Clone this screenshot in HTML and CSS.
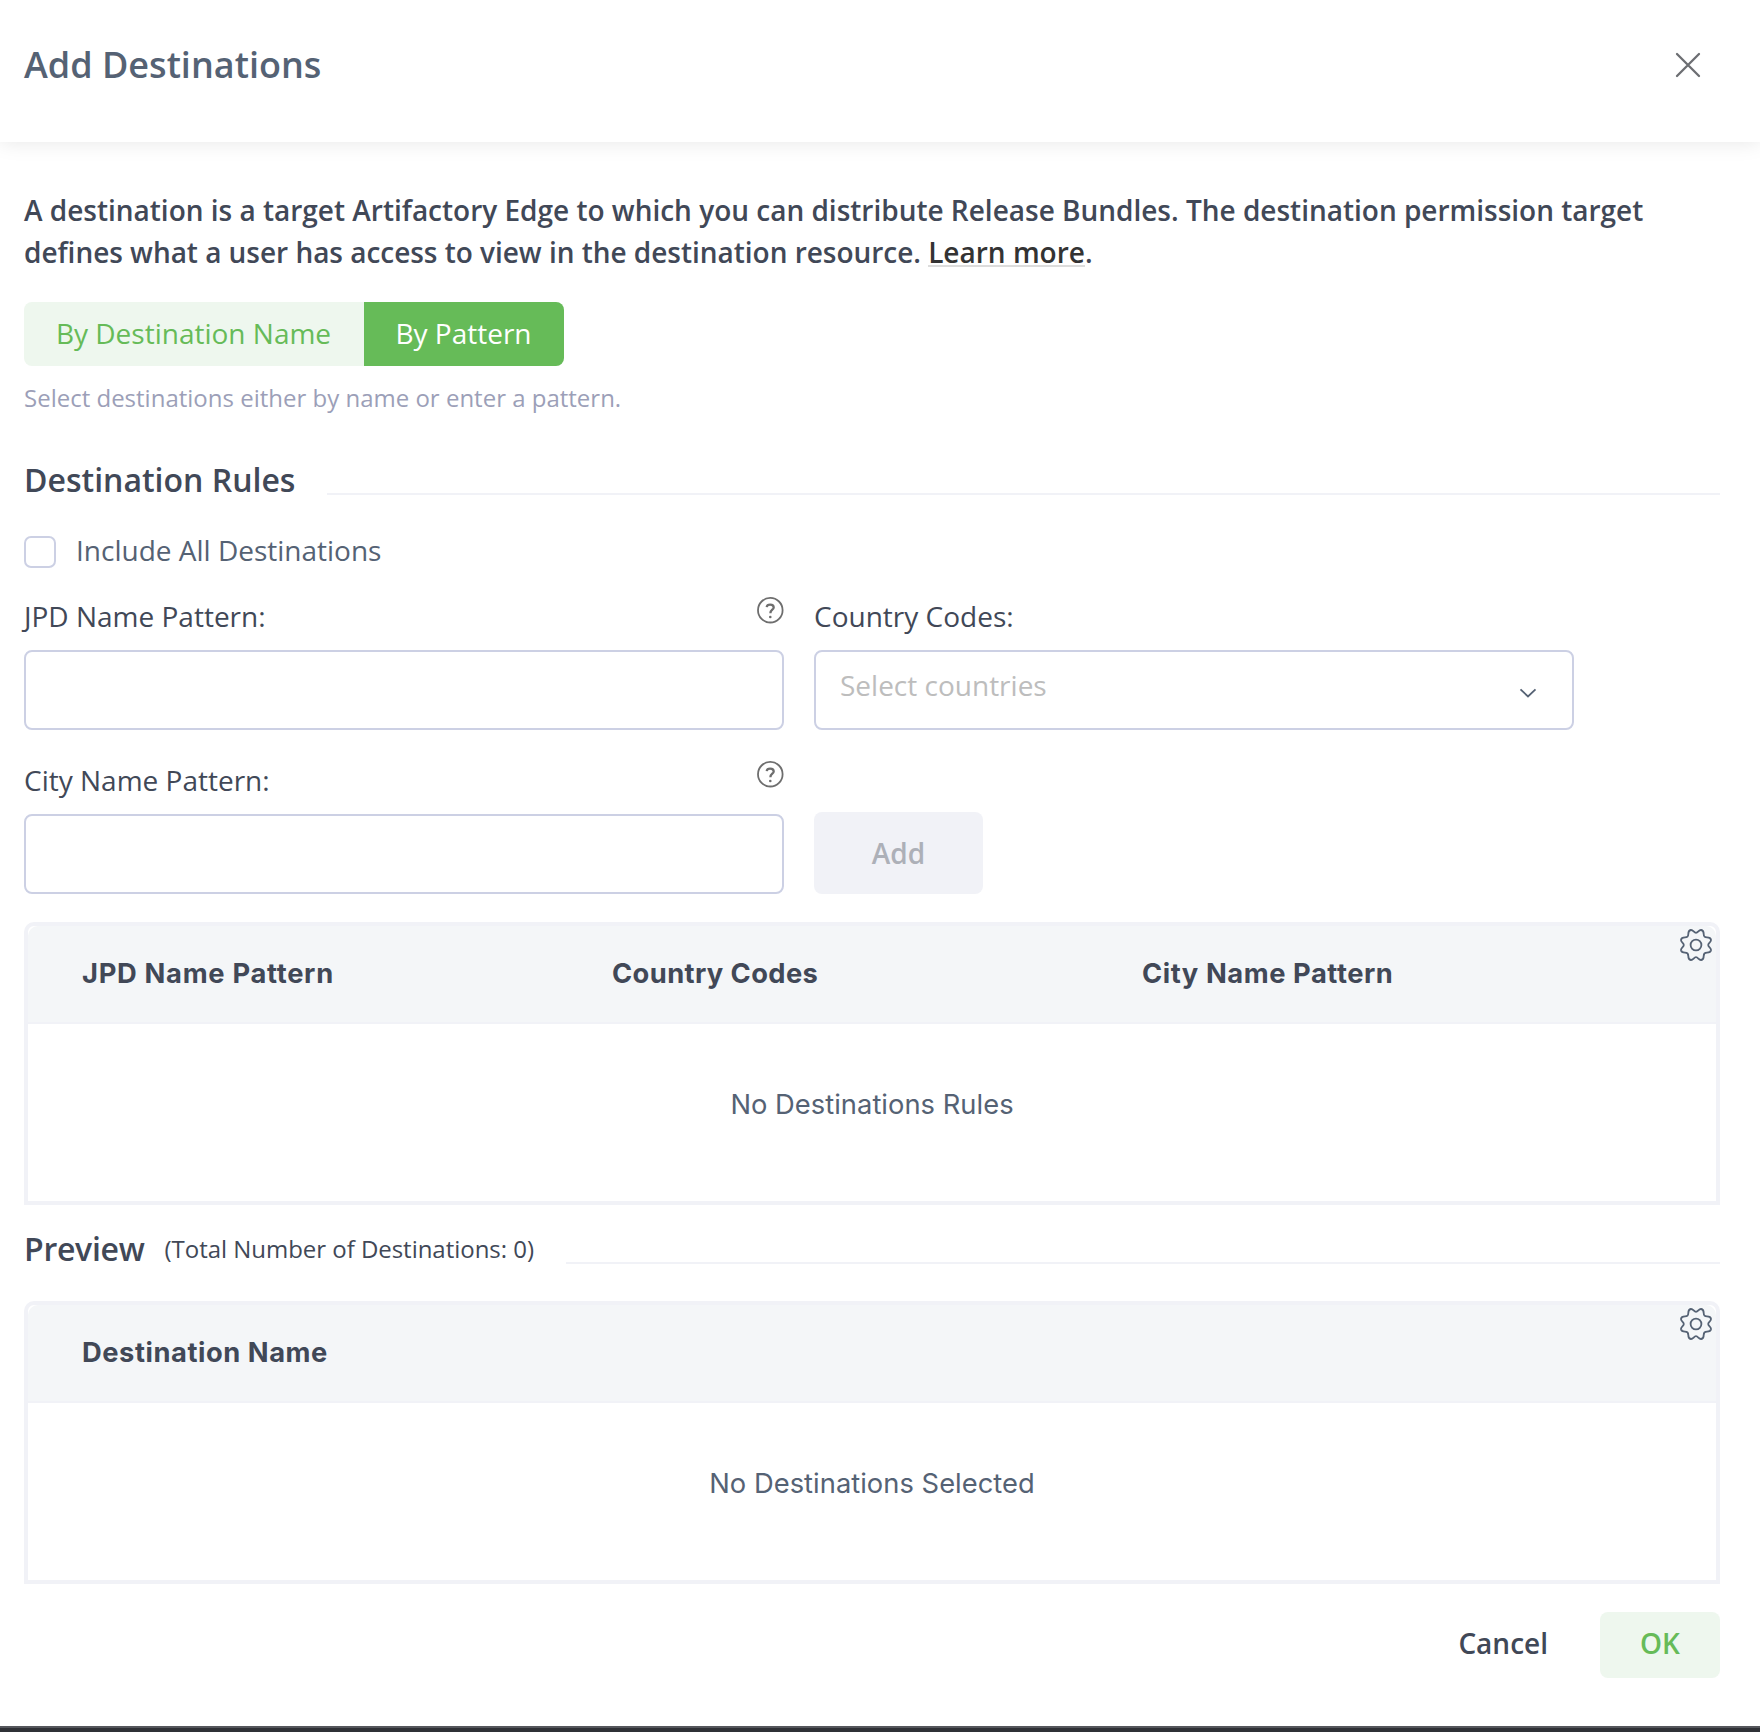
FILE: index.html
```html
<!DOCTYPE html>
<html lang="en">
<head>
<meta charset="utf-8">
<title>Add Destinations</title>
<link rel="stylesheet" href="styles.css">
</head>
<body>
<svg class="sprite" aria-hidden="true">
  <symbol id="gear" viewBox="0 0 32 32">
    <path d="M8.300 5C8.300 2.800 9 1.300 10.800 1C13.300.7 13.800 3.800 16 3.800S18.700.7 21.200 1C23 1.300 23.700 2.800 23.700 5C23.700 7.400 24.600 8.300 27 8.300C29.200 8.300 30.700 9 31 10.800C31.300 13.300 28.200 13.800 28.200 16S31.300 18.700 31 21.200C30.700 23 29.200 23.700 27 23.700C24.600 23.700 23.700 24.600 23.700 27C23.700 29.200 23 30.700 21.200 31C18.700 31.300 18.200 28.200 16 28.200S13.300 31.300 10.800 31C9 30.700 8.300 29.200 8.300 27C8.300 24.600 7.400 23.700 5 23.700C2.800 23.700 1.300 23 1 21.200C.7 18.700 3.800 18.200 3.800 16S.7 13.300 1 10.800C1.300 9 2.800 8.300 5 8.300C7.400 8.300 8.300 7.400 8.300 5Z"/>
    <circle cx="16" cy="16" r="5.400"/>
  </symbol>
  <symbol id="help" viewBox="0 0 28 28">
    <circle cx="14.300" cy="14.200" r="12.300"/>
    <path class="mark" d="M10.700 11.100C10.900 9.600 12.200 8.700 14.200 8.700C16.300 8.700 17.700 9.700 17.700 11.400C17.700 13.800 14.400 13.800 14.400 17.200"/>
    <circle class="dot" cx="14.300" cy="21" r="1.300"/>
  </symbol>
</svg>
<div class="dialog">
  <header class="dialog-header">
    <h1 class="title">Add Destinations</h1>
    <button class="close" aria-label="Close"><svg viewBox="0 0 26 26"><path d="M2 2L24 24M24 2L2 24"/></svg></button>
  </header>
  <main class="content">
    <p class="intro"><span class="intro-first">A destination is a target Artifactory Edge to which you can distribute Release Bundles. The destination permission target</span><br><span class="intro-second">defines what a user has access to view in the destination resource. </span><a class="link">Learn more</a>.</p>
    <div class="tabs">
      <button class="tab">By Destination Name</button>
      <button class="tab tab-active">By Pattern</button>
    </div>
    <p class="hint">Select destinations either by name or enter a pattern.</p>
    <div class="section-head"><h2 class="section-title">Destination Rules</h2><span class="rule"></span></div>
    <div class="check-row"><span class="checkbox"></span><span class="check-label">Include All Destinations</span></div>
    <div class="form">
      <div class="field">
        <div class="label-row"><span class="label">JPD Name Pattern:</span><svg class="help"><use href="#help"/></svg></div>
        <div class="input"></div>
      </div>
      <div class="field">
        <div class="label-row"><span class="label">Country Codes:</span></div>
        <div class="input select"><span class="placeholder">Select countries</span><svg class="chevron" viewBox="0 0 18 10"><path d="M1.500 1.300L9 8.500L16.500 1.300"/></svg></div>
      </div>
      <div class="field">
        <div class="label-row"><span class="label">City Name Pattern:</span><svg class="help"><use href="#help"/></svg></div>
        <div class="input"></div>
      </div>
      <div class="field field-action"><button class="add">Add</button></div>
    </div>
    <section class="table">
      <div class="table-head"><div class="cell cell-jpd">JPD Name Pattern</div><div class="cell cell-country">Country Codes</div><div class="cell">City Name Pattern</div><svg class="gear"><use href="#gear"/></svg></div>
      <div class="table-empty"><span class="empty">No Destinations Rules</span></div>
    </section>
    <div class="section-head preview"><h2 class="section-title">Preview</h2><span class="count">(Total Number of Destinations: 0)</span><span class="rule"></span></div>
    <section class="table">
      <div class="table-head"><div class="cell">Destination Name</div><svg class="gear"><use href="#gear"/></svg></div>
      <div class="table-empty"><span class="empty">No Destinations Selected</span></div>
    </section>
    <footer class="actions"><button class="cancel">Cancel</button><button class="ok">OK</button></footer>
  </main>
  <div class="backdrop-edge"></div>
</div>
</body>
</html>
```
FILE: styles.css
```css
* { box-sizing: border-box; }
body { margin: 0; background: #fff; color: #414857; font-family: "Open Sans", sans-serif; font-size: 28px; line-height: 42px; }
h1, h2, p { margin: 0; }
button { border: 0; padding: 0; background: none; font: inherit; color: inherit; text-align: center; }
svg { display: block; fill: none; }
.sprite { position: absolute; width: 0; height: 0; }
.dialog { display: flex; flex-direction: column; height: 1732px; overflow: hidden; }

.dialog-header { display: flex; align-items: center; justify-content: space-between; flex: none; height: 142px; padding: 0 59px 12px 24px; box-shadow: 0 0 20px rgba(0, 0, 0, .1); }
.title { font-size: 36px; font-weight: 600; line-height: 48px; color: #556274; }
.close { width: 26px; height: 26px; }
.close svg { stroke: #6c6e72; stroke-width: 2.300; stroke-linecap: round; }

.content { display: flex; flex-direction: column; flex: 1; padding: 47px 40px 0 24px; }
.intro { font-weight: 600; white-space: nowrap; }
.intro-first { letter-spacing: -.009px; }
.intro-second { letter-spacing: -.029px; }
.link { background: linear-gradient(#dcdcdc, #dcdcdc) 0 calc(100% - 4px) / 100% 2px no-repeat; color: #333; }
.tabs { display: flex; align-self: flex-start; height: 64px; margin-top: 29px; border-radius: 8px; overflow: hidden; background: #eef7ee; color: #66bb58; }
.tab { width: 340px; padding: 0 1px 2px 0; }
.tab-active { width: 200px; background: #66bb58; color: #fff; }
.hint { margin-top: 14px; font-size: 24px; line-height: 36px; color: #9c9fb8; }

.section-head { display: flex; align-items: flex-end; height: 48px; margin-top: 31px; }
.section-title { font-size: 32px; font-weight: 600; line-height: 31px; }
.rule { flex: 1; height: 2px; margin: 0 0 0 32px; background: #f1f2f7; }
.check-row { display: flex; align-items: center; gap: 20px; height: 42px; margin-top: 34px; color: #556274; }
.checkbox { width: 32px; height: 32px; margin-top: 4px; border: 2px solid #ccd0e4; border-radius: 7px; }

.form { display: grid; grid-template-columns: 760px 760px; column-gap: 30px; row-gap: 29px; margin-top: 24px; }
.label-row { display: flex; justify-content: space-between; height: 55px; }
.help { width: 28px; height: 28px; margin-top: 1px; stroke: #6e6e6e; stroke-width: 1.800; }
.mark { stroke-width: 2.300; }
.dot { fill: #6e6e6e; stroke: none; }
.input { height: 80px; border: 2px solid #ccd0e4; border-radius: 8px; background: #fff; }
.select { display: flex; align-items: center; justify-content: space-between; padding: 0 35px 0 24px; }
.placeholder { margin-bottom: 10px; color: #bdbdbd; }
.chevron { width: 18px; height: 10px; margin-top: 5px; stroke: #556274; stroke-width: 1.800; }
.field-action { display: flex; align-items: flex-end; }
.add { width: 169px; height: 82px; border-radius: 8px; background: #f1f2f7; color: #adb0b8; font-weight: 600; }

.table { position: relative; flex: none; height: 283px; margin-top: 28px; border: 4px solid #f1f2f7; border-radius: 10px 10px 0 0; font-family: Inter, sans-serif; font-size: 27.300px; }
.table-head { display: flex; align-items: center; height: 98px; border-bottom: 2px solid #f1f2f7; border-radius: 10px 10px 0 0; background: #f4f6f8; padding-left: 54px; font-weight: 700; }
.cell { width: 530px; letter-spacing: .56px; }
.cell-jpd { letter-spacing: .7px; }
.cell-country { letter-spacing: .4px; }
.gear { position: absolute; top: 3px; right: 4px; width: 32px; height: 32px; stroke: #556274; stroke-width: 1.800; }
.table-empty { display: flex; align-items: center; justify-content: center; height: 162px; letter-spacing: .04px; color: #556274; }
.preview { margin-top: 11px; }
.preview .section-title { letter-spacing: -.28px; }
.preview + .table { margin-top: 37px; }
.count { margin-left: 20px; font-size: 24px; line-height: 30px; letter-spacing: -.03px; }
.actions { display: flex; justify-content: flex-end; gap: 52px; margin-top: 28px; font-weight: 600; }
.cancel, .ok { height: 66px; padding-bottom: 4px; }
.ok { width: 120px; border-radius: 8px; background: #eef7ee; color: #66bb58; }
.backdrop-edge { flex: none; height: 6px; border-top: 2px solid #55575c; background: #2f3136; }
```
